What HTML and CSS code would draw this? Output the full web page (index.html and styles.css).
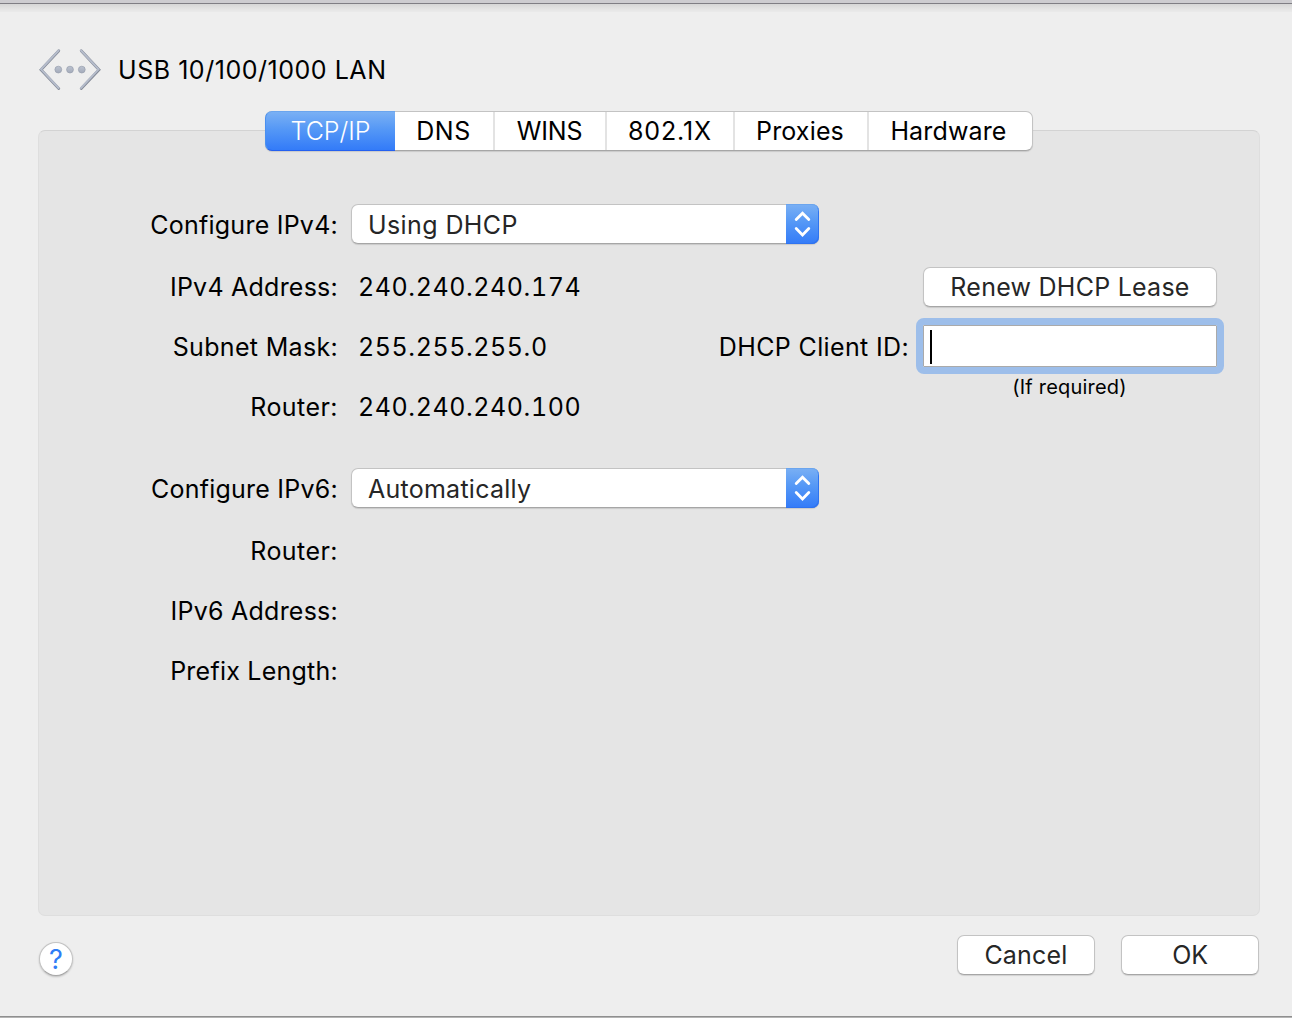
FILE: index.html
```html
<!DOCTYPE html>
<html lang="en">
<head>
<meta charset="utf-8">
<title>USB 10/100/1000 LAN</title>
<link rel="stylesheet" href="styles.css">
</head>
<body>
<main class="sheet">
  <header class="header">
    <svg class="lan-icon" width="64" height="44" viewBox="0 0 64 44" aria-hidden="true">
      <defs>
        <linearGradient id="metal" x1="0" y1="0" x2="0" y2="1">
          <stop offset="0" stop-color="#bcc3d0"/>
          <stop offset="1" stop-color="#a3aaba"/>
        </linearGradient>
      </defs>
      <g fill="none" stroke-linecap="round" stroke-linejoin="miter">
        <path d="M20.8 2.8 3 21.7 20.8 40.6M43.2 2.8 61 21.7 43.2 40.6" stroke="#848a97" stroke-width="2.8"/>
        <path d="M20.6 2.5 3 21.3 20.6 40M43 2.5 60.6 21.3 43 40" stroke="#b5bccb" stroke-width="1.9"/>
      </g>
      <g fill="url(#metal)" stroke="#979eac" stroke-width=".7">
        <circle cx="20.3" cy="21.6" r="3.4"/>
        <circle cx="32" cy="21.6" r="3.4"/>
        <circle cx="43.8" cy="21.6" r="3.4"/>
      </g>
    </svg>
    <h1 class="title">USB 10/100/1000 LAN</h1>
  </header>

  <nav class="tabs">
    <button class="tab tab-tcp active">TCP/IP</button>
    <button class="tab tab-dns">DNS</button>
    <button class="tab tab-wins">WINS</button>
    <button class="tab tab-8021x">802.1X</button>
    <button class="tab tab-proxies">Proxies</button>
    <button class="tab tab-hardware">Hardware</button>
  </nav>

  <section class="panel">
    <div class="row row-select">
      <span class="label">Configure IPv4:</span>
      <div class="select">
        <span class="select-text">Using DHCP</span>
        <span class="select-arrows">
          <svg width="33" height="40" viewBox="0 0 33 40" aria-hidden="true"><path d="M10.2 15.6 16.5 9.2l6.3 6.4M10.2 24.6l6.3 6.4 6.3-6.4"/></svg>
        </span>
      </div>
    </div>
    <div class="row row-after-select">
      <span class="label">IPv4 Address:</span>
      <span class="value">240.240.240.174</span>
      <button class="button renew">Renew DHCP Lease</button>
    </div>
    <div class="row">
      <span class="label label-subnet">Subnet Mask:</span>
      <span class="value">255.255.255.0</span>
      <span class="client-label">DHCP Client ID:</span>
      <div class="field"><span class="caret"></span></div>
    </div>
    <div class="row">
      <span class="label label-router">Router:</span>
      <span class="value">240.240.240.100</span>
      <span class="hint">(If required)</span>
    </div>
    <div class="row row-select row-ipv6">
      <span class="label">Configure IPv6:</span>
      <div class="select">
        <span class="select-text select-auto">Automatically</span>
        <span class="select-arrows">
          <svg width="33" height="40" viewBox="0 0 33 40" aria-hidden="true"><path d="M10.2 15.6 16.5 9.2l6.3 6.4M10.2 24.6l6.3 6.4 6.3-6.4"/></svg>
        </span>
      </div>
    </div>
    <div class="row row-after-select"><span class="label label-router">Router:</span></div>
    <div class="row"><span class="label">IPv6 Address:</span></div>
    <div class="row"><span class="label">Prefix Length:</span></div>
  </section>

  <footer class="footer">
    <button class="help">?</button>
    <button class="button cancel">Cancel</button>
    <button class="button ok">OK</button>
  </footer>
</main>
</body>
</html>
```

FILE: styles.css
```css
* {
  box-sizing: border-box;
}

body {
  margin: 0;
  font-family: Inter, "Liberation Sans", sans-serif;
  font-size: 25px;
  color: #000;
}

button {
  margin: 0;
  padding: 0;
  font: inherit;
  color: inherit;
}

.sheet {
  display: flex;
  flex-direction: column;
  width: 1292px;
  height: 1018px;
  padding: 0 32px 0 38px;
  border-top: 3px solid #cdccd0;
  border-bottom: 1px solid #b5b5b5;
  background:
    linear-gradient(#7f7e84, #7f7e84) top / 100% 1px no-repeat,
    linear-gradient(#8f8f8f, #8f8f8f) bottom / 100% 1px no-repeat,
    linear-gradient(#d6d6d6, #e4e4e4 5px, #eaeaea 8px) 0 1px / 100% 8px no-repeat,
    #eeeeee;
}

.header {
  display: flex;
  align-items: center;
  height: 44px;
  margin-top: 45px;
}

.title {
  margin: 0 0 0 16px;
  font-size: 25px;
  font-weight: 400;
  letter-spacing: 0.53px;
}

.tabs {
  position: relative;
  z-index: 1;
  display: flex;
  align-self: flex-start;
  width: 768px;
  height: 40px;
  margin: 19px 0 -21px 227px;
  border: 1px solid #c3c3c3;
  border-bottom-color: #a6a6a6;
  border-radius: 7px;
  background: #fff;
  box-shadow: 0 1px 1px rgba(0, 0, 0, 0.12);
}

.tab {
  border: 0;
  border-right: 2px solid #e3e3e3;
  background: none;
  line-height: 38px;
}

.tab-tcp {
  width: 130px;
  margin: -1px 0 -1px -1px;
}

.tab-dns {
  width: 100px;
  padding-right: 1px;
  letter-spacing: 0.6px;
}

.tab-wins {
  width: 112px;
  padding-right: 1px;
  letter-spacing: -0.15px;
}

.tab-8021x {
  width: 128px;
  letter-spacing: 0.86px;
}

.tab-proxies {
  width: 134px;
  padding-right: 2px;
  letter-spacing: 0.15px;
}

.tab-hardware {
  width: 163px;
  padding-right: 4px;
  border-right: 0;
  letter-spacing: 0.15px;
}

.tab.active {
  border: 1px solid #4a90f0;
  border-top-color: #6ba5ee;
  border-right: 0;
  border-bottom-color: #2460f0;
  border-radius: 7px 0 0 7px;
  background: linear-gradient(#7ab0f4, #5598f6 45%, #337bf8);
  color: #fff;
  font-weight: 350;
}

.panel {
  width: 1222px;
  height: 786px;
  padding-top: 73px;
  border: 1px solid #dedede;
  border-top-color: #d3d3d3;
  border-radius: 7px;
  background: #e5e5e5;
}

.row {
  display: flex;
  align-items: center;
  height: 40px;
  margin-top: 20px;
}

.row-select {
  margin-top: 0;
}

.row-after-select {
  margin-top: 23px;
}

.row-ipv6 {
  margin-top: 41px;
}

.label {
  width: 299px;
  text-align: right;
  letter-spacing: 0.24px;
  line-height: 42px;
}

.row-select .label {
  padding-top: 1px;
}

.label-subnet {
  letter-spacing: 0.32px;
}

.label-router {
  letter-spacing: 0.45px;
}

.value {
  width: 300px;
  margin-left: 20px;
  font-variant-numeric: tabular-nums;
  letter-spacing: 0.57px;
}

.select {
  display: flex;
  width: 468px;
  height: 40px;
  margin-left: 13px;
  border: 1px solid #c3c3c3;
  border-bottom-color: #a6a6a6;
  border-radius: 7px;
  background: #fff;
  box-shadow: 0 1px 1px rgba(0, 0, 0, 0.12);
  color: #262626;
}

.select-text {
  flex: 1;
  padding-left: 16px;
  letter-spacing: 0.4px;
  line-height: 40px;
}

.select-auto {
  letter-spacing: 0.25px;
}

.select-arrows {
  width: 33px;
  height: 40px;
  margin: -1px -1px -1px 0;
  border-radius: 0 7px 7px 0;
  background: linear-gradient(#7ab0f4, #5598f6 45%, #337bf8);
  box-shadow: inset 0 1px #6ba5ee, inset -1px -1px #2f73f0;
}

.select-arrows svg {
  display: block;
  fill: none;
  stroke: #fff;
  stroke-width: 2.8;
  stroke-linecap: round;
}

.button {
  height: 40px;
  border: 1px solid #c3c3c3;
  border-bottom-color: #a6a6a6;
  border-radius: 7px;
  background: #fff;
  box-shadow: 0 1px 1px rgba(0, 0, 0, 0.12);
  color: #262626;
  line-height: 38px;
}

.renew {
  width: 294px;
  margin-left: 265px;
  letter-spacing: 0.25px;
}

.client-label {
  width: 212px;
  margin-left: 39px;
  text-align: right;
  letter-spacing: 0.36px;
}

.field {
  display: flex;
  align-items: center;
  width: 294px;
  height: 42px;
  margin: -2px 0 0 14px;
  padding-left: 6px;
  border: 1px solid #aaa;
  background: #fff;
  outline: 7px solid #9dbeea;
  border-radius: 1px;
}

.caret {
  width: 2px;
  height: 34px;
  margin-top: 2px;
  background: #000;
}

.hint {
  align-self: flex-start;
  width: 293px;
  margin: -12px 0 0 265px;
  text-align: center;
  font-size: 20px;
  line-height: 24px;
  letter-spacing: 0.2px;
}

.footer {
  display: flex;
  align-items: center;
  width: 1221px;
  height: 40px;
  margin-top: 19px;
}

.help {
  width: 34px;
  height: 34px;
  margin: 8px 0 0 1px;
  border: 1px solid #c3c3c3;
  border-bottom-color: #a6a6a6;
  border-radius: 50%;
  background: #fff;
  box-shadow: 0 1px 2px rgba(0, 0, 0, 0.2);
  color: #2f7cf6;
  font-size: 27px;
  line-height: 33px;
}

.cancel {
  width: 138px;
  margin-left: auto;
  letter-spacing: 0.21px;
}

.ok {
  width: 138px;
  margin-left: 26px;
  letter-spacing: -0.3px;
}
```
